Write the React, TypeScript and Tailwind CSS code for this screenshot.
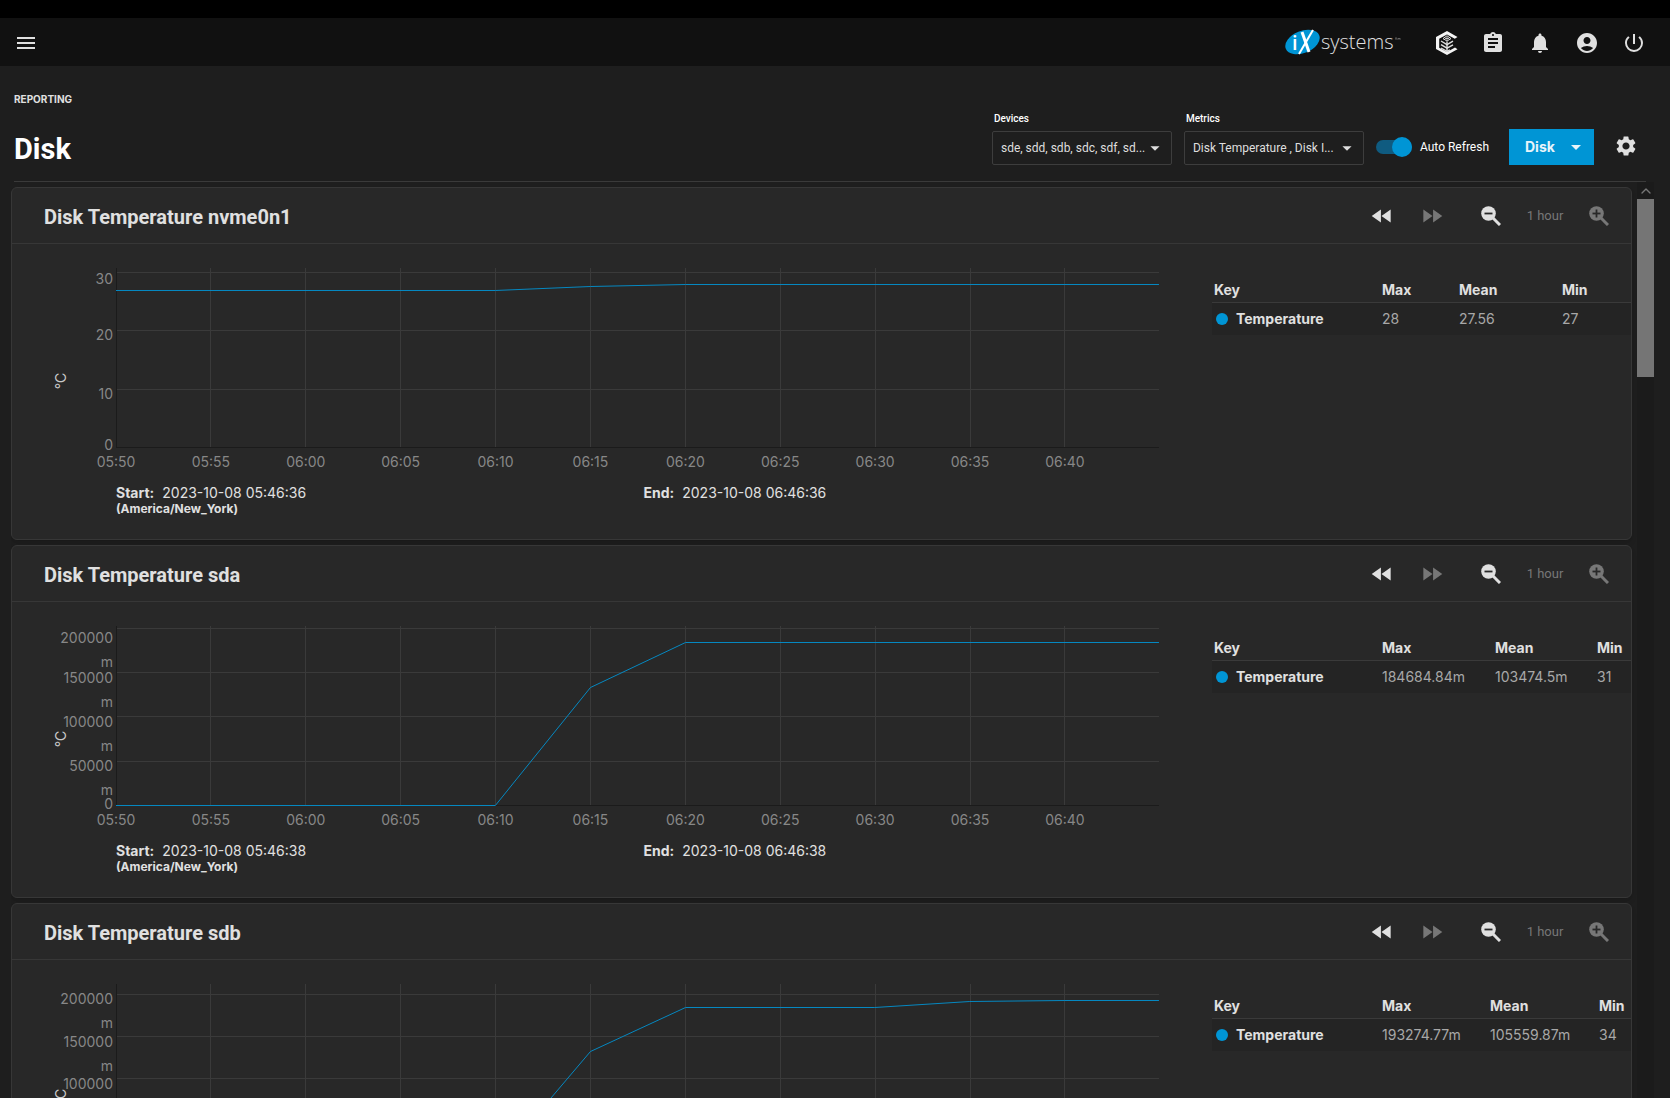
import { clsx } from "clsx";
import { ChevronUp } from "lucide-react";
import React from "react";
import {
  MdAccountCircle,
  MdArrowDropDown,
  MdAssignment,
  MdFastForward,
  MdFastRewind,
  MdMenu,
  MdNotifications,
  MdPowerSettingsNew,
  MdSettings,
} from "react-icons/md";

type Tick = { y: number; labelY: number; label: string; unit?: string };

type Report = {
  id: string;
  title: string;
  ticks: Tick[];
  zeroY: number;
  points: [number, number][];
  start: string;
  end: string;
  columns: string;
  max: string;
  mean: string;
  min: string;
};

const PLOT_WIDTH = 1042;
const PLOT_HEIGHT = 179;

const TIMES = [
  "05:50",
  "05:55",
  "06:00",
  "06:05",
  "06:10",
  "06:15",
  "06:20",
  "06:25",
  "06:30",
  "06:35",
  "06:40",
];

const REPORTS: Report[] = [
  {
    id: "nvme0n1",
    title: "Disk Temperature nvme0n1",
    ticks: [
      { y: 4, labelY: 16, label: "30" },
      { y: 62, labelY: 72, label: "20" },
      { y: 121, labelY: 131, label: "10" },
    ],
    zeroY: 182,
    points: [
      [0, 22],
      [379, 22],
      [474, 18],
      [569, 16],
      [1042, 16],
    ],
    start: "2023-10-08 05:46:36",
    end: "2023-10-08 06:46:36",
    columns: "grid-cols-[168px_77px_103px_1fr]",
    max: "28",
    mean: "27.56",
    min: "27",
  },
  {
    id: "sda",
    title: "Disk Temperature sda",
    ticks: [
      { y: 2, labelY: 17, label: "200000", unit: "m" },
      { y: 46, labelY: 57, label: "150000", unit: "m" },
      { y: 90, labelY: 101, label: "100000", unit: "m" },
      { y: 135, labelY: 145, label: "50000", unit: "m" },
    ],
    zeroY: 183,
    points: [
      [0, 179],
      [379, 179],
      [474, 61],
      [569, 16],
      [1042, 16],
    ],
    start: "2023-10-08 05:46:38",
    end: "2023-10-08 06:46:38",
    columns: "grid-cols-[168px_113px_102px_1fr]",
    max: "184684.84m",
    mean: "103474.5m",
    min: "31",
  },
  {
    id: "sdb",
    title: "Disk Temperature sdb",
    ticks: [
      { y: 10, labelY: 20, label: "200000", unit: "m" },
      { y: 52, labelY: 63, label: "150000", unit: "m" },
      { y: 94, labelY: 105, label: "100000", unit: "m" },
      { y: 136, labelY: 147, label: "50000", unit: "m" },
    ],
    zeroY: 183,
    points: [
      [0, 179],
      [379, 179],
      [474, 67],
      [569, 23],
      [758, 23],
      [853, 17],
      [948, 16],
      [1042, 16],
    ],
    start: "2023-10-08 05:46:38",
    end: "2023-10-08 06:46:38",
    columns: "grid-cols-[168px_108px_109px_1fr]",
    max: "193274.77m",
    mean: "105559.87m",
    min: "34",
  },
];

function percentX(index: number) {
  return `${((index * 94.8) / PLOT_WIDTH) * 100}%`;
}

function Logo() {
  return (
    <svg width="116" height="32" viewBox="0 0 116 32" aria-label="iX systems">
      <ellipse
        cx="17.5"
        cy="15"
        rx="18"
        ry="11"
        fill="#0095d5"
        transform="rotate(-22 17.5 15)"
      />
      <text
        x="7"
        y="23"
        fill="#fff"
        fontSize="20"
        fontWeight="600"
        fontFamily="'Open Sans', sans-serif"
      >
        i
      </text>
      <g stroke="#fff" fill="none">
        <path d="M17 5 L24 25" strokeWidth="3" />
        <path d="M28 3 L14 27" strokeWidth="2" />
      </g>
      <text
        x="36"
        y="22"
        fill="#e0e0e0"
        fontSize="20"
        fontWeight="300"
        fontFamily="'Open Sans', sans-serif"
      >
        systems
      </text>
      <path
        d="M110 11h2M111 11v2M113 13v-2l1 1 1-1v2"
        stroke="#999"
        strokeWidth="0.5"
        fill="none"
      />
    </svg>
  );
}

function TrueCommandIcon() {
  return (
    <svg width="22" height="24" viewBox="0 0 22 24" fill="none">
      <path
        d="M0 6 11 0l10.5 6-2.7 1.7L11 3.4 3.2 7.8v9l7.8 4.2 8-4.6 2.5 1.8L11 24 0 18z"
        fill="#f4f4f4"
      />
      <g stroke="#dedede" strokeWidth="1.4">
        <path d="M11 10.5V21" />
        <path d="M5 10l6 3.6 6-3.4" />
        <path d="M5 13.6l6 3.6 6-3.4" />
        <path d="M5 17l6 3.4 3-1.6" />
        <path d="M11 4.8 15 7.6 11 10 7 7.6z" strokeWidth="1" />
        <path d="M11 6v3M9 7.5h4" strokeWidth="0.8" />
      </g>
    </svg>
  );
}

function Magnifier({ plus = false }: { plus?: boolean }) {
  return (
    <svg width="20" height="20" viewBox="0 0 20 20">
      <circle cx="7.5" cy="7.5" r="7.3" fill="currentColor" />
      <path d="M11 11l8 8" stroke="currentColor" strokeWidth="3" />
      <path d="M3.5 7.5h8" stroke="#282828" strokeWidth="1.8" />
      {plus && <path d="M7.5 3.5v8" stroke="#282828" strokeWidth="1.8" />}
    </svg>
  );
}

function Chart({ report }: { report: Report }) {
  return (
    <svg
      className="block w-full overflow-visible"
      height="205"
      role="img"
      aria-label={report.title}
    >
      {TIMES.slice(1).map((time, index) => (
        <line
          key={time}
          x1={percentX(index + 1)}
          x2={percentX(index + 1)}
          y1="0"
          y2={PLOT_HEIGHT}
          stroke="#3a3a3a"
          shapeRendering="crispEdges"
        />
      ))}
      <g shapeRendering="crispEdges">
        {report.ticks.map((tick) => (
          <line
            key={tick.label}
            x1="0"
            x2="100%"
            y1={tick.y + 0.5}
            y2={tick.y + 0.5}
            stroke="#3a3a3a"
          />
        ))}
        <line x1="0.5" x2="0.5" y1="0" y2={PLOT_HEIGHT} stroke="#1b1b1b" />
        <line x1="0" x2="100%" y1="179.5" y2="179.5" stroke="#1b1b1b" />
      </g>
      <svg
        width="100%"
        height={PLOT_HEIGHT + 1}
        viewBox={`0 0 ${PLOT_WIDTH} ${PLOT_HEIGHT + 1}`}
        preserveAspectRatio="none"
      >
        <polyline
          points={report.points.map(([x, y]) => `${x},${y + 0.5}`).join(" ")}
          fill="none"
          stroke="#0588c1"
          vectorEffect="non-scaling-stroke"
        />
      </svg>
      <g fill="#878787" fontSize="14" textAnchor="end">
        {report.ticks.map((tick) => (
          <React.Fragment key={tick.label}>
            <text x="-3" y={tick.labelY}>
              {tick.label}
            </text>
            {tick.unit && (
              <text x="-3" y={tick.labelY + 24}>
                {tick.unit}
              </text>
            )}
          </React.Fragment>
        ))}
        <text x="-3" y={report.zeroY}>
          0
        </text>
      </g>
      <g fill="#878787" fontSize="14" textAnchor="middle">
        {TIMES.map((time, index) => (
          <text key={time} x={percentX(index)} y="199">
            {time}
          </text>
        ))}
      </g>
      <text
        fill="#c8c8c8"
        fontSize="14"
        textAnchor="middle"
        transform="translate(-50 113) rotate(-90)"
      >
        °C
      </text>
    </svg>
  );
}

function Legend({ report }: { report: Report }) {
  return (
    <table className="mt-9 block w-[419px] shrink-0 text-left text-sm leading-5">
      <thead className="block border-b border-[#3a3a3a] pb-0.5">
        <tr className={clsx("grid pl-0.5 font-bold text-[#e0e0e0]", report.columns)}>
          <th>Key</th>
          <th>Max</th>
          <th>Mean</th>
          <th>Min</th>
        </tr>
      </thead>
      <tbody className="block bg-[#242424]">
        <tr className={clsx("grid py-1.5 pl-0.5 text-[#a8a8a8]", report.columns)}>
          <th className="flex items-center gap-2 pl-0.5 font-bold text-[#e0e0e0]">
            <span className="h-3 w-3 rounded-full bg-[#0095d5]" />
            Temperature
          </th>
          <td>{report.max}</td>
          <td>{report.mean}</td>
          <td>{report.min}</td>
        </tr>
      </tbody>
    </table>
  );
}

function ReportCard({ report }: { report: Report }) {
  return (
    <section className="shrink-0 rounded-md border border-[#373737] bg-[#282828] shadow-md">
      <header className="flex h-14 items-center justify-between border-b border-[#373737] pr-[22px] pl-8">
        <h2 className="pt-0.5 font-[Roboto] text-xl font-bold text-[#e0e0e0]">{report.title}</h2>
        <div className="flex items-center text-[#e0e0e0]">
          <button aria-label="Step back" className="mr-6">
            <MdFastRewind size={26} />
          </button>
          <button aria-label="Step forward" disabled className="mr-9 text-[#777]">
            <MdFastForward size={26} />
          </button>
          <button aria-label="Zoom out">
            <Magnifier />
          </button>
          <span className="w-[88px] text-center font-[Roboto] text-[13px] text-[#777]">
            1 hour
          </span>
          <button aria-label="Zoom in" disabled className="text-[#777]">
            <Magnifier plus />
          </button>
        </div>
      </header>
      <div className="flex">
        <div className="min-w-0 flex-1 pt-6 pr-[53px] pb-6 pl-[104px]">
          <Chart report={report} />
          <div className="mt-2.5 grid grid-cols-2 text-sm leading-5 text-[#e0e0e0]">
            <div>
              <p>
                <b className="mr-2">Start:</b>
                {report.start}
              </p>
              <p className="text-xs leading-3 font-bold">(America/New_York)</p>
            </div>
            <p className="pl-1.5">
              <b className="mr-2">End:</b>
              {report.end}
            </p>
          </div>
        </div>
        <Legend report={report} />
      </div>
    </section>
  );
}

function Picker({ label, value }: { label: string; value: string }) {
  return (
    <label className="flex w-[180px] flex-col gap-1 font-[Roboto]">
      <span className="pl-0.5 text-[10px] leading-4 font-medium text-white">{label}</span>
      <span className="relative block">
        <select className="h-[34px] w-full appearance-none truncate rounded-xs border border-[#3d3d3d] bg-transparent pr-6 pl-2 text-xs text-[#dedede]">
          <option>{value}</option>
        </select>
        <MdArrowDropDown
          size={22}
          className="pointer-events-none absolute top-1.5 right-1.5 text-[#dedede]"
        />
      </span>
    </label>
  );
}

export default function App() {
  return (
    <div className="flex h-screen flex-col overflow-hidden bg-[#1e1e1e] font-[Inter,sans-serif] text-[#e0e0e0]">
      <div className="h-[18px] shrink-0 bg-black" />
      <header className="flex h-12 shrink-0 items-center justify-between bg-[#111] pt-0.5 pr-6 pl-3.5">
        <button aria-label="Menu">
          <MdMenu size={24} />
        </button>
        <div className="flex items-center gap-[23px]">
          <a href="#" className="mr-3">
            <Logo />
          </a>
          <button aria-label="TrueCommand">
            <TrueCommandIcon />
          </button>
          <button aria-label="Tasks">
            <MdAssignment size={24} />
          </button>
          <button aria-label="Alerts">
            <MdNotifications size={24} />
          </button>
          <button aria-label="Account">
            <MdAccountCircle size={24} />
          </button>
          <button aria-label="Power">
            <MdPowerSettingsNew size={24} />
          </button>
        </div>
      </header>

      <div className="mr-6 ml-3.5 flex h-[116px] shrink-0 items-end justify-between border-b border-[#3a3a3a] pb-4">
        <div className="self-start pt-6">
          <a href="#" className="block text-[10px] leading-[18px] font-bold">
            REPORTING
          </a>
          <h1 className="mt-[21px] font-[Roboto] text-[29px] leading-10 font-bold text-white">Disk</h1>
        </div>
        <div className="flex items-end gap-3">
          <Picker label="Devices" value="sde, sdd, sdb, sdc, sdf, sd..." />
          <Picker label="Metrics" value="Disk Temperature , Disk I..." />
          <label className="flex h-9 items-center gap-2 font-[Roboto] text-xs text-white">
            <input type="checkbox" role="switch" defaultChecked className="peer sr-only" />
            <span className="flex h-3.5 w-9 items-center justify-end rounded-full bg-[#0f5b80]">
              <span className="h-5 w-5 rounded-full bg-[#0095d5]" />
            </span>
            Auto Refresh
          </label>
          <button className="ml-2 flex h-9 w-[85px] items-center justify-between bg-[#0095d5] pr-1.5 pl-4 text-sm font-bold text-[#e8f4fa]">
            Disk
            <MdArrowDropDown size={24} />
          </button>
          <button aria-label="Settings" className="mr-2 ml-2 pb-[7px]">
            <MdSettings size={24} />
          </button>
        </div>
      </div>

      <div className="mr-4 ml-[11px] flex min-h-0 flex-1">
        <main className="flex min-w-0 flex-1 flex-col gap-[5px] overflow-hidden pt-[5px] pr-[5px]">
          {REPORTS.map((report) => (
            <ReportCard key={report.id} report={report} />
          ))}
        </main>
        <div className="w-[17px] bg-[#1b1b1b]">
          <div className="flex h-[17px] items-center justify-center text-[#777]">
            <ChevronUp size={16} />
          </div>
          <div className="h-[178px] bg-[#757575]" />
        </div>
      </div>
    </div>
  );
}
